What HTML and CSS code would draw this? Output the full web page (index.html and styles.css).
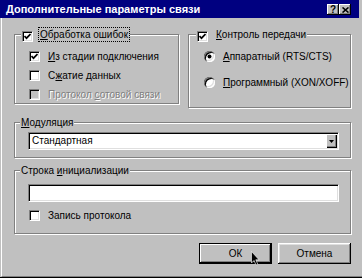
FILE: index.html
```html
<!DOCTYPE html>
<html lang="ru">
<head>
<meta charset="utf-8">
<title>Дополнительные параметры связи</title>
<link rel="stylesheet" href="styles.css">
</head>
<body>
<div class="window">
  <div class="titlebar">
    <span class="title">Дополнительные параметры связи</span>
    <div class="caption-btns">
      <span class="cbtn help">?</span>
      <span class="cbtn close"><svg width="7" height="6" viewBox="0 0 7 6"><path d="M0.5 0.5 L6.5 5.5 M6.5 0.5 L0.5 5.5" stroke="#000" stroke-width="1.6" fill="none"/></svg></span>
    </div>
  </div>
  <div class="client">
    <div class="row-top">
      <fieldset class="group g-errors">
        <legend class="lg-check"><span class="chk checked"><svg width="7" height="7" viewBox="0 0 7 7"><path d="M0.5 3 L2.5 5.2 L6.5 1" stroke="#000" stroke-width="1.7" fill="none"/></svg></span><span class="focus"><u>О</u>бработка ошибок</span></legend>
        <div class="items">
          <div class="item"><span class="chk checked"><svg width="7" height="7" viewBox="0 0 7 7"><path d="M0.5 3 L2.5 5.2 L6.5 1" stroke="#000" stroke-width="1.7" fill="none"/></svg></span><span><u>И</u>з стадии подключения</span></div>
          <div class="item"><span class="chk"></span><span>С<u>ж</u>атие данных</span></div>
          <div class="item disabled"><span class="chk"></span><span>Протокол <u>с</u>отовой связи</span></div>
        </div>
      </fieldset>
      <fieldset class="group g-flow">
        <legend class="lg-check2"><span class="chk checked"><svg width="7" height="7" viewBox="0 0 7 7"><path d="M0.5 3 L2.5 5.2 L6.5 1" stroke="#000" stroke-width="1.7" fill="none"/></svg></span><span class="lbl"><u>К</u>онтроль передачи</span></legend>
        <div class="radios">
          <div class="item"><span class="radio on"></span><span><u>А</u>ппаратный (RTS/CTS)</span></div>
          <div class="item"><span class="radio"></span><span><u>П</u>рограммный (XON/XOFF)</span></div>
        </div>
      </fieldset>
    </div>
    <fieldset class="group g-mod">
      <legend class="lg-text"><u>М</u>одуляция</legend>
      <div class="combo">
        <span class="combo-text">Стандартная</span>
        <span class="combo-btn"><svg width="5" height="3" viewBox="0 0 5 3"><path d="M0 0 H5 L2.5 3 Z" fill="#000"/></svg></span>
      </div>
    </fieldset>
    <fieldset class="group g-init">
      <legend class="lg-text">Строка <u>и</u>нициализации</legend>
      <div class="field"></div>
      <div class="item"><span class="chk"></span><span>Запись протокола</span></div>
    </fieldset>
    <div class="buttons">
      <button class="btn default">ОК</button>
      <button class="btn">Отмена</button>
    </div>
  </div>
  <svg class="cursor" width="9" height="15" viewBox="0 0 9 15"><path d="M0.5 0.5 V12 L3 9.5 L5 14 L6.8 13.2 L4.8 8.8 H8 Z" fill="#000" stroke="#fff" stroke-width="0.6"/></svg>
</div>
</body>
</html>
```

FILE: styles.css
```css
* { box-sizing: border-box; }

body {
  margin: 0;
  background: #c0c0c0;
  font-family: "Liberation Sans", Arial, sans-serif;
  font-size: 10px;
  color: #000;
}

.window {
  position: relative;
  width: 362px;
  height: 278px;
  display: flex;
  flex-direction: column;
  overflow: hidden;
  border-bottom: 1px solid #000;
}

.titlebar {
  height: 18px;
  flex: none;
  margin-right: 3px;
  background: #000080;
  color: #fff;
  display: flex;
  align-items: center;
  padding: 0 8px 0 6px;
}

.title {
  flex: 1;
  font-weight: bold;
  font-size: 11px;
  white-space: nowrap;
}

.caption-btns {
  display: flex;
  margin-top: 1px;
}

.cbtn {
  width: 12px;
  height: 11px;
  background: #c0c0c0;
  box-shadow: inset -1px -1px #000, inset 1px 1px #fff, inset -2px -2px #808080;
  display: flex;
  align-items: center;
  justify-content: center;
  color: #000;
  font-weight: bold;
  font-size: 10px;
  line-height: 11px;
}

.client {
  flex: 1;
  margin-left: 1px;
  border-left: 1px solid #fff;
  border-bottom: 1px solid #808080;
  padding: 10px 11px 0 12px;
  display: flex;
  flex-direction: column;
}

.row-top {
  display: grid;
  grid-template-columns: 165px 163px;
  column-gap: 9px;
  align-items: start;
}

.group {
  margin: 0;
  padding: 0;
  min-width: 0;
  border: 1px solid #808080;
  box-shadow: inset 1px 1px #fff, 1px 1px #fff;
}

.group legend {
  padding: 0 1px;
  line-height: 13px;
  height: 13px;
  background: #c0c0c0;
  white-space: nowrap;
}

.lg-check { margin-left: 6px; }
.lg-check2 { margin-left: 7px; }
.lg-text { margin-left: 5px; }

.lg-check .chk,
.lg-check2 .chk {
  display: inline-flex;
  vertical-align: top;
  margin-top: 3px;
}

.focus {
  display: inline-block;
  margin-left: 6px;
  padding: 0 1px;
  outline: 1px dotted #000;
}

.lbl {
  display: inline-block;
  margin-left: 8px;
}

.items {
  display: flex;
  flex-direction: column;
  gap: 6px;
  padding: 9px 0 2px 14px;
}

.radios {
  display: flex;
  flex-direction: column;
  gap: 13px;
  padding: 9px 0 18px 15px;
}

.item {
  display: flex;
  align-items: center;
  height: 13px;
  white-space: nowrap;
}

.chk {
  width: 11px;
  height: 11px;
  flex: none;
  background: #fff;
  border: 1px solid;
  border-color: #808080 #fff #fff #808080;
  box-shadow: inset 1px 1px #000, inset -1px -1px #dfdfdf;
  display: flex;
  align-items: center;
  justify-content: center;
  margin-right: 8px;
}

.lg-check .chk,
.lg-check2 .chk { margin-right: 0; }

.disabled { color: #808080; text-shadow: 1px 1px #fff; }
.disabled .chk { background: #c0c0c0; }

.radio {
  position: relative;
  width: 11px;
  height: 11px;
  flex: none;
  border-radius: 50%;
  background: #fff;
  box-shadow: inset 1px 1px #808080, inset 2px 2px #000, inset -1px -1px #fff, inset -2px -2px #dfdfdf;
  margin-right: 8px;
}

.radio.on::after {
  content: "";
  position: absolute;
  left: 4px;
  top: 4px;
  width: 3px;
  height: 3px;
  border-radius: 50%;
  background: #000;
  box-shadow: 0 0 0 0.5px #000;
}

.g-mod {
  margin-top: 8px;
  padding: 0 11px 7px 13px;
}

.g-mod legend { margin-left: -8px; }

.combo {
  margin-top: 3px;
  height: 18px;
  background: #fff;
  border: 1px solid;
  border-color: #808080 #fff #fff #808080;
  box-shadow: inset 1px 1px #000, inset -1px -1px #dfdfdf;
  display: flex;
  align-items: center;
  padding: 1px 1px 1px 3px;
}

.combo-text {
  flex: 1;
  line-height: 14px;
}

.combo-btn {
  width: 11px;
  height: 14px;
  background: #c0c0c0;
  box-shadow: inset 1px 1px #fff, inset -1px -1px #000, inset -2px -2px #808080;
  display: flex;
  align-items: center;
  justify-content: center;
  padding-right: 1px;
}

.g-init {
  margin-top: 6px;
  padding: 0 11px 11px 13px;
}

.g-init legend { margin-left: -8px; }

.field {
  margin-top: 7px;
  height: 18px;
  background: #fff;
  border: 1px solid;
  border-color: #808080 #fff #fff #808080;
  box-shadow: inset 1px 1px #000, inset -1px -1px #dfdfdf;
}

.g-init .item {
  margin-top: 7px;
  padding-left: 1px;
}

.buttons {
  display: flex;
  justify-content: flex-end;
  gap: 6px;
  margin-top: 9px;
}

.btn {
  width: 73px;
  height: 21px;
  padding: 0;
  margin: 0;
  border: none;
  background: #c0c0c0;
  font-family: "Liberation Sans", Arial, sans-serif;
  font-size: 10px;
  color: #000;
  box-shadow: inset -1px -1px #000, inset 1px 1px #fff, inset -2px -2px #808080, inset 2px 2px #dfdfdf;
}

.btn.default {
  border: 1px solid #000;
  box-shadow: inset -1px -1px #000, inset 1px 1px #fff, inset -2px -2px #808080;
}

.cursor {
  position: absolute;
  left: 251px;
  top: 251px;
}
```
